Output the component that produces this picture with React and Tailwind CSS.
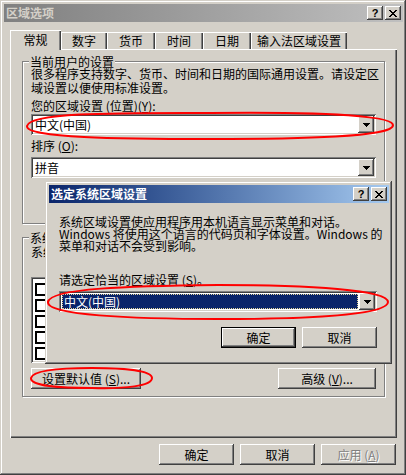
import React from "react";

const raised =
  "bg-[#d4d0c8] shadow-[inset_-1px_-1px_#404040,inset_1px_1px_#ffffff,inset_-2px_-2px_#808080]";
const sunken =
  "shadow-[inset_1px_1px_#808080,inset_-1px_-1px_#ffffff,inset_2px_2px_#404040,inset_-2px_-2px_#d4d0c8]";
const frame =
  "bg-[#d4d0c8] shadow-[inset_-1px_-1px_#404040,inset_1px_1px_#d4d0c8,inset_-2px_-2px_#808080,inset_2px_2px_#ffffff]";
const etched = "border border-[#808080] shadow-[1px_1px_#ffffff,inset_1px_1px_#ffffff]";

const closeRows = ["XX....XX", ".XX..XX.", "..XXXX..", "...XX...", "..XXXX..", ".XX..XX.", "XX....XX"];

function CloseGlyph() {
  return (
    <svg width="8" height="7" shapeRendering="crispEdges">
      {closeRows.map((row, y) =>
        row.split("").map((c, x) => (c === "X" ? <rect key={`${x}-${y}`} x={x} y={y} width="1" height="1" fill="#000" /> : null))
      )}
    </svg>
  );
}

function CapButton({ children }) {
  return (
    <div className={`w-[16px] h-[14px] flex items-center justify-center ${raised}`}>{children}</div>
  );
}

function TitleBar({ title, active }) {
  return (
    <div
      className={
        active
          ? "h-[18px] flex items-center bg-linear-to-r from-[#0a246a] to-[#a6caf0]"
          : "h-[18px] flex items-center bg-linear-to-r from-[#808080] to-[#c0c0c0]"
      }
    >
      <span className={active ? "pl-[2px] font-bold text-white leading-[14px]" : "pl-[2px] font-bold text-[#d4d0c8] leading-[14px]"}>
        {title}
      </span>
      <div className="ml-auto mr-[2px] flex gap-[2px]">
        <CapButton>
          <span className="font-['Liberation_Sans',sans-serif] font-bold text-[11px] leading-[11px] pt-[1px]">?</span>
        </CapButton>
        <CapButton>
          <CloseGlyph />
        </CapButton>
      </div>
    </div>
  );
}

function Arrow() {
  return (
    <svg width="7" height="4" shapeRendering="crispEdges">
      <path d="M0 0h7v1h-1v1h-1v1h-1v1h-1v-1h-1v-1h-1v-1h-1z" fill="#000" />
    </svg>
  );
}

function Combo({ value, selected, width }) {
  return (
    <div className={`flex h-[21px] p-[2px] bg-white ${sunken} ${width}`}>
      {selected ? (
        <div className="flex-1 flex p-[1px]">
          <div className="flex-1 flex items-center pl-[1px] bg-[#0a246a] text-white border border-dotted border-[#e6d79c]">
            {value}
          </div>
        </div>
      ) : (
        <div className="flex-1 flex items-center pl-[2px]">{value}</div>
      )}
      <div className={`w-[16px] h-[17px] flex items-center justify-center ${raised}`}>
        <Arrow />
      </div>
    </div>
  );
}

function Button({ children, width, isDefault, disabled }) {
  const face = isDefault
    ? "bg-[#d4d0c8] shadow-[inset_0_0_0_1px_#000000,inset_-2px_-2px_#404040,inset_2px_2px_#ffffff,inset_-3px_-3px_#808080]"
    : raised;
  return (
    <div className={`h-[21px] flex items-center justify-center ${face} ${width}`}>
      <span className={disabled ? "text-[#808080] [text-shadow:1px_1px_#ffffff]" : ""}>{children}</span>
    </div>
  );
}

function Tab({ label, width, selected }) {
  return (
    <div
      className={
        selected
          ? `relative h-[20px] -mb-[1px] flex items-center justify-center bg-[#d4d0c8] shadow-[inset_1px_1px_#ffffff,inset_-1px_0_#404040,inset_-2px_0_#808080] ${width}`
          : `h-[17px] flex items-center justify-center bg-[#d4d0c8] shadow-[inset_1px_1px_#ffffff,inset_-1px_0_#404040,inset_-2px_0_#808080] ${width}`
      }
    >
      {label}
    </div>
  );
}

function Annotations() {
  return (
    <svg className="absolute inset-0 z-30 pointer-events-none" width="406" height="475">
      <g fill="none" stroke="#ff0000" strokeWidth="2">
        <path d="M27 126 C 30 112, 120 113, 210 113 C 300 112, 392 114, 393 125 C 394 137, 300 139, 210 139 C 120 139, 25 138, 27 126 Z" />
        <path d="M48 302 C 50 288, 130 286, 218 285 C 310 285, 388 290, 388 302 C 388 315, 310 319, 218 319 C 130 319, 46 315, 48 302 Z" />
        <path d="M31 378 C 33 370, 60 368, 92 368 C 125 368, 152 371, 152 378 C 152 386, 125 389, 92 388 C 60 388, 30 386, 31 378 Z" />
      </g>
    </svg>
  );
}

function Dialog() {
  return (
    <div className={`absolute left-[45px] top-[181px] z-20 w-[347px] h-[183px] pt-[4px] pl-[4px] pr-[3px] flex flex-col ${frame}`}>
      <TitleBar title="选定系统区域设置" active />
      <div className="pl-[10px] flex flex-col">
        <p className="mt-[13px] leading-[12px]">
          系统区域设置使应用程序用本机语言显示菜单和对话。
          <br />
          Windows 将使用这个语言的代码页和字体设置。Windows 的
          <br />
          菜单和对话不会受到影响。
        </p>
        <p className="mt-[22px] leading-[12px]">
          请选定恰当的区域设置 (<u>S</u>)。
        </p>
        <div className="mt-[5px]">
          <Combo value="中文(中国)" selected width="w-[318px]" />
        </div>
        <div className="mt-[15px] mr-[12px] flex justify-end gap-[6px]">
          <Button width="w-[75px]" isDefault>确定</Button>
          <Button width="w-[75px]">取消</Button>
        </div>
      </div>
    </div>
  );
}

export default function App() {
  return (
    <div
      className={`relative w-[406px] h-[475px] pt-[4px] pl-[4px] pr-[3px] flex flex-col overflow-hidden font-['Noto_Sans_CJK_SC',sans-serif] text-[12px] text-black ${frame}`}
    >
      <TitleBar title="区域选项" />

      <div className="relative z-10 mt-[8px] ml-[6px] h-[19px] flex items-end">
        <Tab label="常规" width="w-[51px]" selected />
        <Tab label="数字" width="w-[46px]" />
        <Tab label="货币" width="w-[48px]" />
        <Tab label="时间" width="w-[48px]" />
        <Tab label="日期" width="w-[48px]" />
        <Tab label="输入法区域设置" width="w-[96px]" />
      </div>

      <div className="ml-[6px] w-[387px] h-[389px] pt-[12px] pl-[12px] flex flex-col shadow-[inset_1px_1px_#ffffff,inset_-1px_-1px_#404040,inset_-2px_-2px_#808080]">
        <div className={`w-[363px] h-[163px] pl-[8px] flex flex-col ${etched}`}>
          <span className="-mt-[7px] -ml-[2px] self-start px-[1px] bg-[#d4d0c8] leading-[13px]">当前用户的设置</span>
          <p className="-mt-[1px] leading-[14px]">
            很多程序支持数字、货币、时间和日期的国际通用设置。请设定区
            <br />
            域设置以便使用标准设置。
          </p>
          <span className="mt-[4px] leading-[14px]">
            您的区域设置 (位置)(<u>Y</u>):
          </span>
          <div className="mt-[1px]">
            <Combo value="中文(中国)" width="w-[345px]" />
          </div>
          <span className="mt-[4px] leading-[14px]">
            排序 (<u>O</u>):
          </span>
          <div className="mt-[4px]">
            <Combo value="拼音" width="w-[345px]" />
          </div>
        </div>

        <div className={`mt-[13px] w-[363px] h-[160px] pl-[8px] flex flex-col ${etched}`}>
          {/* the rest of this group sits under the dialog; only its left strip shows */}
          <span className="-mt-[7px] -ml-[2px] self-start w-[16px] px-[1px] overflow-hidden whitespace-nowrap bg-[#d4d0c8] leading-[13px]">
            系统的语言设置
          </span>
          <p className="mt-[1px] w-[14px] overflow-hidden whitespace-nowrap leading-[14px]">系统已被配置为可以读写多种语言的文档。</p>
          <div className={`mt-[18px] w-[345px] h-[86px] p-[2px] pt-[4px] bg-white flex flex-col ${sunken}`}>
            {[0, 1, 2, 3, 4].map((i) => (
              <div key={i} className="h-[17px] flex items-center pl-[2px]">
                <div className="w-[13px] h-[13px] border-2 border-black bg-white" />
              </div>
            ))}
          </div>
          <div className="mt-[5px] w-[345px] flex justify-between">
            <Button width="w-[110px]">
              设置默认值 (<u>S</u>)...
            </Button>
            <Button width="w-[98px]">
              高级 (<u>V</u>)...
            </Button>
          </div>
        </div>
      </div>

      <div className="mt-[6px] mr-[7px] flex justify-end gap-[6px]">
        <Button width="w-[75px]">确定</Button>
        <Button width="w-[75px]">取消</Button>
        <Button width="w-[75px]" disabled>
          应用 (<u>A</u>)
        </Button>
      </div>

      <Dialog />
      <Annotations />
    </div>
  );
}
